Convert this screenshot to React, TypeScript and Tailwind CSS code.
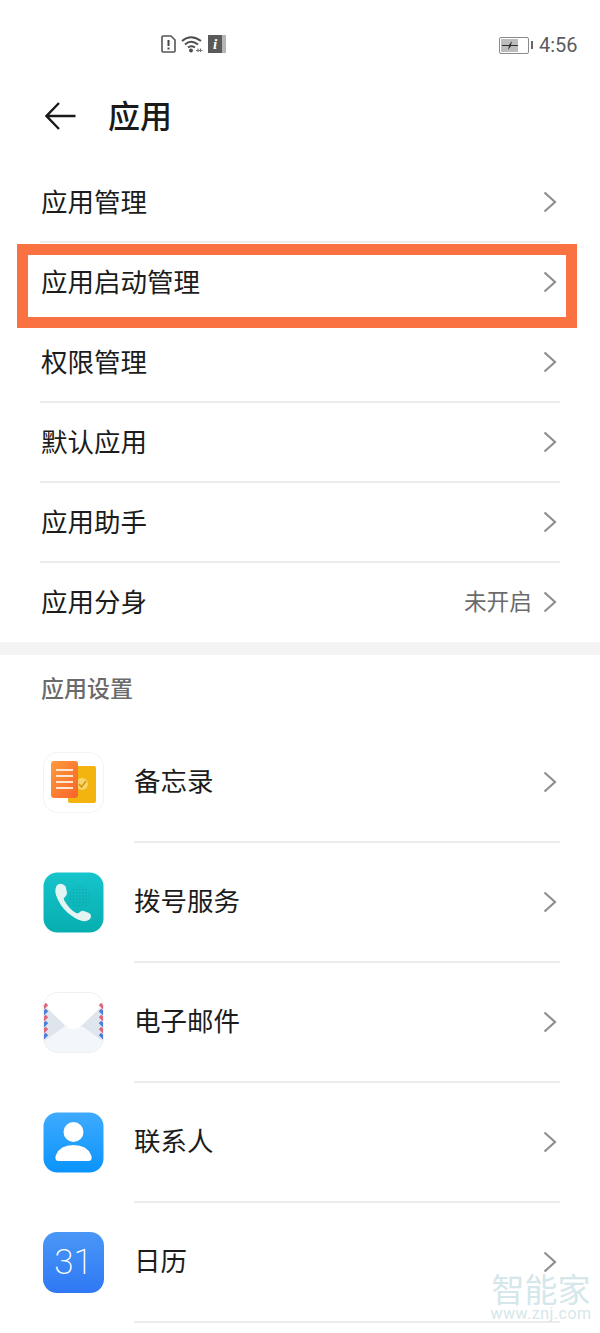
import { ReactNode } from "react";

const Chevron = () => (
  <svg width="16" height="24" viewBox="0 0 16 24" fill="none" className="shrink-0">
    <path d="M2.5 2.5 L13 12 L2.5 21.5" stroke="#8f8f8f" strokeWidth="2.2" />
  </svg>
);

const SimRow = ({ label, value, last }: { label: string; value?: string; last?: boolean }) => (
  <div className={`mx-10 flex items-center justify-between ${last ? "h-[79px]" : "h-20 border-b-2 border-[#ececec]"}`}>
    <span className={`text-[26.5px] text-[#1c1c1c] pl-px ${last ? "pb-[3px]" : "pb-[2px]"}`}>{label}</span>
    <div className="flex items-center gap-[10px] pr-[2px]">
      {value && <span className="text-[22.7px] text-[#6b6b6b] pb-[2px]">{value}</span>}
      <Chevron />
    </div>
  </div>
);

const AppRow = ({ icon, label }: { icon: ReactNode; label: string }) => (
  <div className="h-30 flex items-center pl-[43px] pr-10">
    <div className="w-[61px] h-[61px] shrink-0 mb-[2px]">{icon}</div>
    <div className="ml-[30px] flex-1 h-full flex items-center justify-between border-b-2 border-[#ececec] pr-[2px]">
      <span className="text-[26.5px] text-[#1c1c1c] pb-[4px]">{label}</span>
      <Chevron />
    </div>
  </div>
);

const MemoIcon = () => (
  <svg viewBox="0 0 61 61" className="w-full h-full">
    <defs>
      <linearGradient id="memoOrange" x1="0" y1="0" x2="1" y2="1">
        <stop offset="0" stopColor="#ff9a3c" />
        <stop offset="1" stopColor="#f9642a" />
      </linearGradient>
    </defs>
    <rect x="0.5" y="0.5" width="60" height="60" rx="14" fill="#fff" stroke="#f3f3f3" />
    <rect x="25" y="14" width="28" height="37" rx="2" fill="#f3b40f" />
    <circle cx="39" cy="32" r="6" fill="#f8d56c" />
    <path d="M36 32 L38.5 35 L43 29" stroke="#d8960a" strokeWidth="1.6" fill="none" />
    <rect x="8" y="9" width="27" height="37" rx="3" fill="url(#memoOrange)" />
    <path d="M13 18 H30 M13 24 H30 M13 30 H30 M13 36 H30" stroke="#ffe6cf" strokeWidth="1.8" />
  </svg>
);

const DialIcon = () => (
  <svg viewBox="0 0 61 61" className="w-full h-full">
    <defs>
      <linearGradient id="dialBg" x1="0" y1="0" x2="0" y2="1">
        <stop offset="0" stopColor="#16c4cb" />
        <stop offset="1" stopColor="#06aeb0" />
      </linearGradient>
      <pattern id="dialDots" width="3.2" height="3.2" patternUnits="userSpaceOnUse">
        <circle cx="1.6" cy="1.6" r="0.6" fill="#0b9296" />
      </pattern>
    </defs>
    <rect x="0.5" y="0.5" width="60" height="60" rx="14" fill="url(#dialBg)" />
    <circle cx="37" cy="25" r="11" fill="url(#dialDots)" />
    <path
      d="M13 15 Q15 11 19 12 L21 13 Q23 14 23 16 L24 21 Q24 23 22 25 Q20 26 21 28 Q26 37 33 41 Q35 42 37 40 Q39 38 41 39 L46 41 Q48 42 48 44 Q48 48 43 49 Q37 50 29 44 Q20 38 15 28 Q11 20 13 15 Z"
      fill="#e4f4f3"
    />
  </svg>
);

const MailIcon = () => (
  <svg viewBox="0 0 61 61" className="w-full h-full">
    <defs>
      <clipPath id="mailClip">
        <rect x="0.5" y="0.5" width="60" height="60" rx="14" />
      </clipPath>
    </defs>
    <g clipPath="url(#mailClip)">
      <rect width="61" height="61" fill="#fbfcfd" />
      <path d="M0 12 L24 35 L0 50 Z" fill="#dfe5ec" />
      <path d="M61 12 L37 35 L61 50 Z" fill="#dfe5ec" />
      <path d="M0 50 L22 34 Q30 41 39 34 L61 50 V61 H0 Z" fill="#f3f6fa" />
      <path d="M0 0 H61 V12 L39 33 Q30 40 22 33 L0 12 Z" fill="#ffffff" />
      <path d="M0 16 L4 12 M0 28 L4 24 M0 40 L4 36" stroke="#e0657a" strokeWidth="3.4" />
      <path d="M0 22 L4 18 M0 34 L4 30 M0 46 L4 42" stroke="#4a7fdc" strokeWidth="3.4" />
      <path d="M57 12 L61 16 M57 24 L61 28 M57 36 L61 40" stroke="#e0657a" strokeWidth="3.4" />
      <path d="M57 18 L61 22 M57 30 L61 34 M57 42 L61 46" stroke="#4a7fdc" strokeWidth="3.4" />
    </g>
    <rect x="0.5" y="0.5" width="60" height="60" rx="14" fill="none" stroke="#f0f0f0" />
  </svg>
);

const ContactIcon = () => (
  <svg viewBox="0 0 61 61" className="w-full h-full">
    <defs>
      <linearGradient id="contactBg" x1="0" y1="0" x2="0" y2="1">
        <stop offset="0" stopColor="#3eaaff" />
        <stop offset="1" stopColor="#0a94fb" />
      </linearGradient>
    </defs>
    <rect x="0.5" y="0.5" width="60" height="60" rx="14" fill="url(#contactBg)" />
    <circle cx="30.5" cy="20" r="10" fill="#fff" />
    <path d="M12.5 47 Q12 45 13 43 Q17 33 30.5 33 Q44 33 48 43 Q49 45 48.5 47 Q48 49 46 49 H15 Q13 49 12.5 47 Z" fill="#fff" />
  </svg>
);

const CalendarIcon = () => (
  <div className="w-full h-full rounded-[14px] bg-gradient-to-b from-[#4a97f7] to-[#2f78f4] flex items-center justify-center">
    <span className="text-[35px] leading-none text-white font-extralight font-['Roboto',sans-serif]">31</span>
  </div>
);

export default function App() {
  return (
    <div className="relative w-[600px] h-[1333px] overflow-hidden bg-white font-['Noto_Sans_CJK_SC','Noto_Sans',sans-serif]">
      {/* status bar */}
      <div className="h-[88px] relative">
        <div className="flex items-center gap-[5px] absolute left-[161px] top-[35px]">
          <svg width="15" height="18" viewBox="0 0 15 18" fill="none">
            <path d="M1 2 Q1 1 2 1 H10 L14 5 V16 Q14 17 13 17 H2 Q1 17 1 16 Z" stroke="#555" strokeWidth="1.6" />
            <path d="M7.5 5 V11 M7.5 12.5 V14.5" stroke="#444" strokeWidth="2" />
          </svg>
          <svg width="22" height="18" viewBox="0 0 22 18" fill="none">
            <path d="M1 6 Q10 -1.5 20 6 M4 9.5 Q10 4 17 9.5 M7 12.5 Q10 10 14 12.5" stroke="#4f4f4f" strokeWidth="2" />
            <circle cx="10" cy="15.5" r="2" fill="#4f4f4f" />
            <path d="M15 15.5 H21.5 M17 13.5 V17 M19.5 13.5 V17" stroke="#777" strokeWidth="1.2" />
          </svg>
          <div className="flex items-stretch h-[18px]">
            <div className="w-[14px] bg-[#5a5a5a] flex items-center justify-center">
              <span className="text-[15px] leading-none italic font-bold text-white font-['Liberation_Serif',serif]">i</span>
            </div>
            <div className="w-[4px] bg-[#b5b5b5]" />
          </div>
        </div>
        <div className="flex items-center absolute left-[499px] top-[33px]">
          <div className="w-[30px] h-[17px] border border-[#8a8a8a] rounded-[2px] p-px">
            <div className="w-[17px] h-full bg-[#bdbdbd] flex items-center justify-center">
              <svg width="16" height="11" viewBox="0 0 16 11">
                <path d="M0 5 H7 L10 1 L9 5 H16 V6 H9 L6 10 L7 6 H0 Z" fill="#2e2e2e" />
              </svg>
            </div>
          </div>
          <div className="w-[2px] h-[8px] bg-[#666] ml-[2px]" />
          <span className="ml-[6px] text-[20px] leading-6 text-[#5c5c5c] font-['Roboto',sans-serif]">4:56</span>
        </div>
      </div>

      {/* title */}
      <div className="h-[75px] flex items-start pl-[45px]">
        <svg width="31" height="28" viewBox="0 0 31 28" fill="none" className="mt-[14px]">
          <path d="M14 1 L1.5 14 L14 27 M1.5 14 H30.5" stroke="#1a1a1a" strokeWidth="2.4" />
        </svg>
        <h1 className="ml-8 text-[32px] leading-[52px] font-medium text-[#1a1a1a]">应用</h1>
      </div>

      <SimRow label="应用管理" />
      <SimRow label="应用启动管理" />
      <SimRow label="权限管理" />
      <SimRow label="默认应用" />
      <SimRow label="应用助手" />
      <SimRow label="应用分身" value="未开启" last />

      <div className="h-[13px] bg-[#f4f4f4]" />

      <div className="h-[68px] pl-[41px] pb-[3px] flex items-center">
        <span className="text-[23px] font-medium text-[#6a6a6a]">应用设置</span>
      </div>

      <AppRow icon={<MemoIcon />} label="备忘录" />
      <AppRow icon={<DialIcon />} label="拨号服务" />
      <AppRow icon={<MailIcon />} label="电子邮件" />
      <AppRow icon={<ContactIcon />} label="联系人" />
      <AppRow icon={<CalendarIcon />} label="日历" />

      {/* highlight box */}
      <div className="absolute left-[17px] top-[244px] w-[560px] h-[84px] border-[11px] border-[#fb7242]" />

      {/* watermark */}
      <div className="absolute left-[490px] top-[1271px] w-[102px] flex flex-col items-center text-[#d5e7ea]">
        <span className="text-[33px] leading-[34px] whitespace-nowrap">智能家</span>
        <span className="text-[16px] leading-[18px] tracking-[0.5px] whitespace-nowrap font-['Roboto',sans-serif]">www.znj.com</span>
      </div>
    </div>
  );
}
